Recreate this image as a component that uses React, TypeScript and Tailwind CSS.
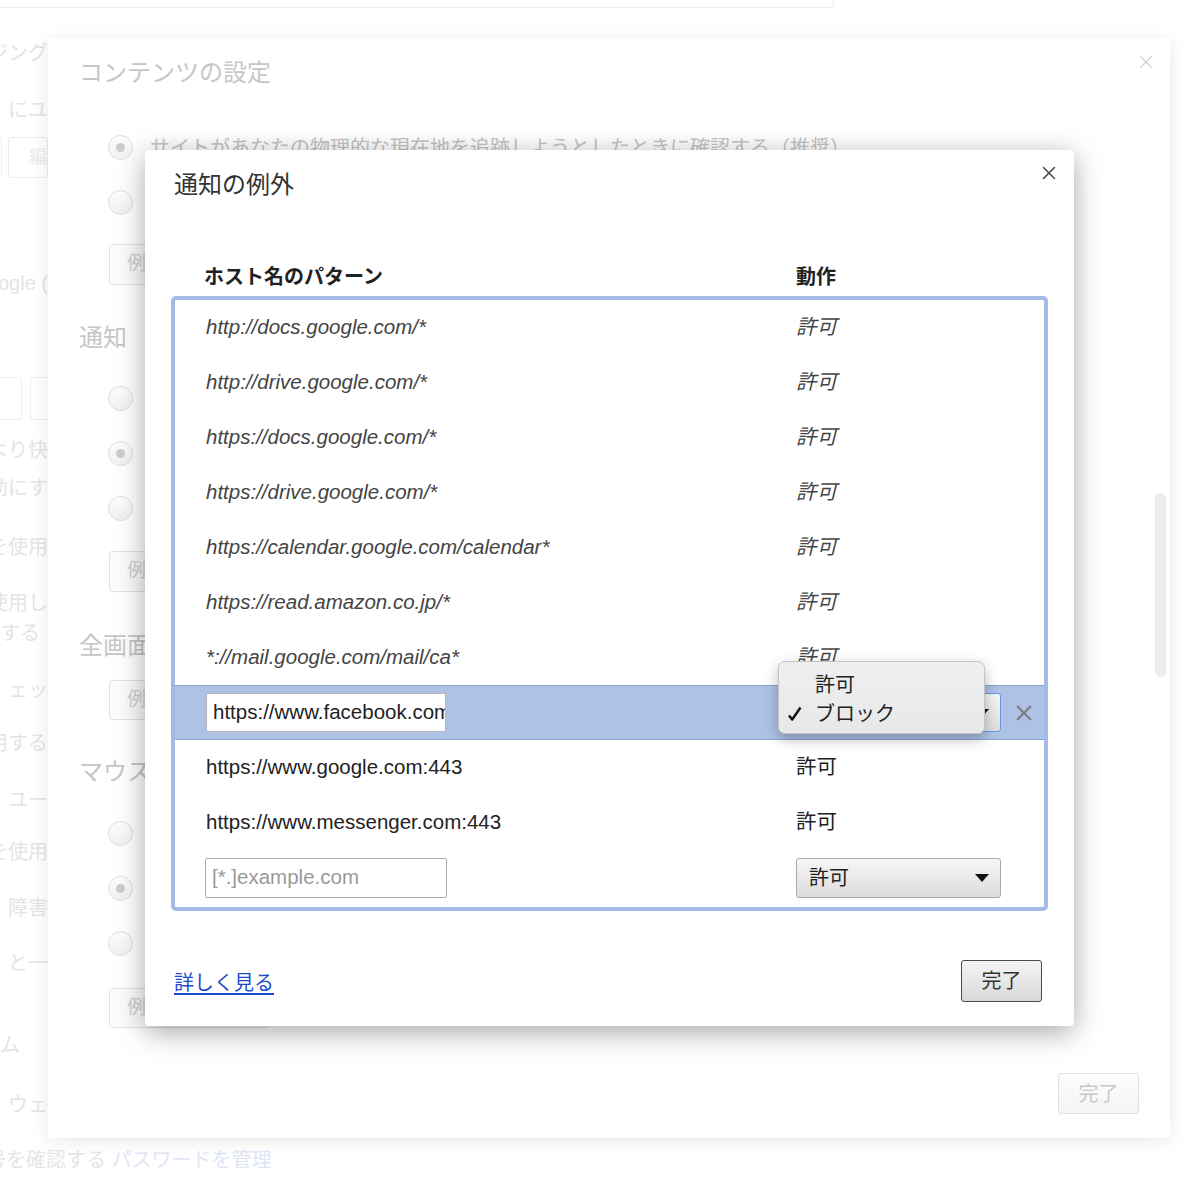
import type { ReactNode } from 'react';

const POLICY_ROWS = [
  'http://docs.google.com/*',
  'http://drive.google.com/*',
  'https://docs.google.com/*',
  'https://drive.google.com/*',
  'https://calendar.google.com/calendar*',
  'https://read.amazon.co.jp/*',
  '*://mail.google.com/mail/ca*',
];

const USER_ROWS = ['https://www.google.com:443', 'https://www.messenger.com:443'];

function Cross({ size, stroke, color }: { size: number; stroke: number; color: string }) {
  return (
    <svg width={size} height={size} viewBox="0 0 16 16" fill="none">
      <path d="M2 2 14 14M14 2 2 14" stroke={color} strokeWidth={stroke} strokeLinecap="square" />
    </svg>
  );
}

function Caret() {
  return (
    <svg width="14" height="8" viewBox="0 0 14 8">
      <path d="M0 0h14L7 8z" fill="#111" />
    </svg>
  );
}

// ---------- far background (settings page) ----------

function FadedLine({ mt, children }: { mt: string; children: ReactNode }) {
  return (
    <div className={`${mt} flex h-[28px] items-center justify-end whitespace-nowrap text-[20px] leading-[28px] text-[#e4e4e4]`}>
      {children}
    </div>
  );
}

function BackgroundPage() {
  return (
    <div className="flex flex-col">
      <div className="h-[8px] w-[834px] rounded-br-[3px] border-b border-r border-[#eeeeee]" />
      <div className="flex w-[48px] flex-col overflow-hidden">
        <FadedLine mt="mt-[31px]">ブラウジング</FadedLine>
        <FadedLine mt="mt-[29px]">にユ</FadedLine>
        <div className="mt-[13px] flex h-[41px] justify-end gap-[6px]">
          <div className="w-[40px] shrink-0 rounded-[3px] border border-[#eeeeee]" />
          <div className="flex w-[40px] shrink-0 items-center rounded-[3px] border border-[#eeeeee] pl-[20px] text-[18px] text-[#eaeaea]">
            編
          </div>
        </div>
        <FadedLine mt="mt-[91px]">Google (</FadedLine>
        <div className="mt-[80px] flex h-[43px] justify-end gap-[8px]">
          <div className="w-[40px] shrink-0 rounded-[3px] border border-[#eeeeee]" />
          <div className="w-[18px] shrink-0 rounded-l-[3px] border border-r-0 border-[#eeeeee]" />
        </div>
        <FadedLine mt="mt-[16px]">より快</FadedLine>
        <FadedLine mt="mt-[10px]">動にす</FadedLine>
        <FadedLine mt="mt-[31px]">を使用</FadedLine>
        <FadedLine mt="mt-[28px]">使用し</FadedLine>
        <div className="mt-[2px] flex h-[28px] items-center whitespace-nowrap text-[20px] leading-[28px] text-[#e4e4e4]">
          する
        </div>
        <FadedLine mt="mt-[29px]">ェッ</FadedLine>
        <FadedLine mt="mt-[25px]">用する</FadedLine>
        <FadedLine mt="mt-[29px]">ユー</FadedLine>
        <FadedLine mt="mt-[24px]">を使用</FadedLine>
        <FadedLine mt="mt-[28px]">障害</FadedLine>
        <FadedLine mt="mt-[27px]">と一</FadedLine>
        <div className="mt-[54px] flex h-[28px] items-center whitespace-nowrap text-[20px] leading-[28px] text-[#e4e4e4]">
          ム
        </div>
        <FadedLine mt="mt-[32px]">ウェ</FadedLine>
      </div>
      <div className="mt-[27px] -ml-[14px] whitespace-nowrap text-[20px] leading-[28px] text-[#e6e6e6]">
        号を確認する <span className="text-[#dfe6f6]">パスワードを管理</span>
      </div>
    </div>
  );
}

// ---------- middle dialog (content settings) ----------

function FadedRadio({ checked, label }: { checked?: boolean; label: string }) {
  return (
    <div className="flex h-[55px] items-center gap-[17px]">
      <div className="flex h-[25px] w-[25px] items-center justify-center rounded-full border border-[#dedede] bg-linear-to-b from-[#fdfdfd] to-[#f1f1f1]">
        {checked && <div className="h-[9px] w-[9px] rounded-full bg-[#cccccc]" />}
      </div>
      <span className="whitespace-nowrap text-[20px] text-[#c4c4c4]">{label}</span>
    </div>
  );
}

function FadedButton({ mt, h }: { mt: string; h: string }) {
  return (
    <div className={`${mt} ${h} ml-[30px] flex w-[160px] items-center rounded-[3px] border border-[#e2e2e2] bg-[#fbfbfb] pl-[17px] text-[19px] text-[#cfcfcf]`}>
      例外を管理...
    </div>
  );
}

function ContentSettingsDialog() {
  return (
    <div className="absolute left-[48px] top-[38px] h-[1100px] w-[1122px] rounded-[4px] bg-white shadow-[0_3px_18px_rgba(0,0,0,0.09)]">
      <div className="absolute right-[17px] top-[17px]">
        <Cross size={14} stroke={1.6} color="#d4d4d4" />
      </div>
      <div className="absolute right-[4px] top-[455px] h-[184px] w-[11px] rounded-full bg-[#ededed]" />

      <div className="flex flex-col pl-[31px] pt-[19px] text-[#c6c6c6]">
        <h2 className="text-[24px] leading-[32px]">コンテンツの設定</h2>
        <div className="ml-[29px] mt-[31px]">
          <FadedRadio checked label="サイトがあなたの物理的な現在地を追跡しようとしたときに確認する（推奨）" />
          <FadedRadio label="サイトに物理的な現在地の追跡を許可しない" />
        </div>
        <FadedButton mt="mt-[14px]" h="h-[41px]" />

        <h3 className="mt-[37px] text-[24px] leading-[32px]">通知</h3>
        <div className="ml-[29px] mt-[17px]">
          <FadedRadio label="すべてのサイトにデスクトップ通知の表示を許可する" />
          <FadedRadio checked label="サイトでデスクトップ通知を表示する場合に確認する（推奨）" />
          <FadedRadio label="サイトにデスクトップ通知の表示を許可しない" />
        </div>
        <FadedButton mt="mt-[15px]" h="h-[41px]" />

        <h3 className="mt-[38px] text-[24px] leading-[32px]">全画面</h3>
        <FadedButton mt="mt-[18px]" h="h-[40px]" />

        <h3 className="mt-[36px] text-[24px] leading-[32px]">マウス カーソル</h3>
        <div className="ml-[29px] mt-[18px]">
          <FadedRadio label="すべてのサイトにマウスカーソルの無効化を許可する" />
          <FadedRadio checked label="サイトでマウスカーソルを無効にする場合に確認する（推奨）" />
          <FadedRadio label="すべてのサイトでマウスカーソルの無効化を許可しない" />
        </div>
        <FadedButton mt="mt-[17px]" h="h-[40px]" />
      </div>

      <div className="absolute bottom-[24px] right-[31px] flex h-[41px] w-[81px] items-center justify-center rounded-[3px] border border-[#e0e0e0] bg-linear-to-b from-[#fdfdfd] to-[#f4f4f4] text-[20px] text-[#c8c8c8]">
        完了
      </div>
    </div>
  );
}

// ---------- front dialog (notification exceptions) ----------

function SelectBox({ focused, h }: { focused?: boolean; h: string }) {
  return (
    <div
      className={`flex ${h} w-[205px] items-center justify-between rounded-[3px] border bg-linear-to-b from-[#f5f5f5] to-[#dddddd] pl-[12px] pr-[11px] text-[20px] text-[#222] ${
        focused ? 'border-[#6b98e6]' : 'border-[#a9a9a9]'
      }`}
    >
      <span>許可</span>
      <Caret />
    </div>
  );
}

function PopupMenu() {
  return (
    <div className="absolute left-[603px] top-[-25px] z-10 h-[73px] w-[207px] rounded-[7px] border border-[#c4c4c4] bg-linear-to-b from-[#eeeff0] to-[#e7e8e9] pt-[8px] shadow-[0_5px_14px_rgba(0,0,0,0.28)]">
      <div className="flex h-[29px] items-center pl-[36px] text-[20px] text-[#222]">許可</div>
      <div className="flex h-[29px] items-center text-[20px] text-[#222]">
        <svg width="14" height="16" viewBox="0 0 14 16" className="ml-[9px]">
          <path d="M1 9.5 4.2 13.5 12.5 1.5" fill="none" stroke="#111" strokeWidth="2.4" strokeLinejoin="round" />
        </svg>
        <span className="ml-[13px]">ブロック</span>
      </div>
    </div>
  );
}

function NotificationExceptionsDialog() {
  return (
    <div className="absolute left-[145px] top-[150px] flex h-[876px] w-[929px] flex-col rounded-[4px] bg-white shadow-[0_6px_28px_rgba(0,0,0,0.35)]">
      <div className="absolute right-[18px] top-[16px]">
        <Cross size={14} stroke={2} color="#555" />
      </div>

      <h2 className="pl-[29px] pt-[19px] text-[24px] leading-[32px] text-[#333]">通知の例外</h2>

      <div className="mx-[26px] mt-[62px]">
        <div className="grid h-[28px] grid-cols-[592px_1fr] pl-[33px] text-[20px] font-bold leading-[28px] text-[#222]">
          <span>ホスト名のパターン</span>
          <span>動作</span>
        </div>

        <div className="mt-[5px] h-[615px] rounded-[5px] border-[4px] border-[#a3bae6] bg-white">
          {POLICY_ROWS.map((host) => (
            <div key={host} className="grid h-[55px] grid-cols-[590px_1fr] items-center pl-[31px] text-[20.5px] italic text-[#444]">
              <span>{host}</span>
              <span>許可</span>
            </div>
          ))}

          {/* row being edited */}
          <div className="relative grid h-[55px] grid-cols-[590px_1fr] items-center border-y border-[#86a3d7] bg-[#adc2e5] pl-[31px]">
            <div className="flex h-[39px] w-[240px] items-center overflow-hidden whitespace-nowrap rounded-[2px] border border-[#b5b5b5] bg-white pl-[6px] text-[20.5px] text-[#222]">
              https://www.facebook.com:443
            </div>
            <div className="flex items-center">
              <SelectBox focused h="h-[39px]" />
              <div className="ml-[15px]">
                <Cross size={16} stroke={2.4} color="#808080" />
              </div>
            </div>
            <PopupMenu />
          </div>

          {USER_ROWS.map((host) => (
            <div key={host} className="grid h-[55px] grid-cols-[590px_1fr] items-center pl-[31px] text-[20.5px] text-[#222]">
              <span>{host}</span>
              <span>許可</span>
            </div>
          ))}

          <div className="grid h-[55px] grid-cols-[590px_1fr] items-center pl-[30px]">
            <div className="flex h-[40px] w-[242px] items-center rounded-[2px] border border-[#adadad] bg-white pl-[6px] text-[20.5px] text-[#999]">
              [*.]example.com
            </div>
            <div className="pl-[1px]">
              <SelectBox h="h-[40px]" />
            </div>
          </div>
        </div>
      </div>

      <div className="mt-[49px] flex items-center justify-between pl-[29px] pr-[32px]">
        <a className="mt-[4px] text-[20px] leading-[28px] text-[#1f4bc9] underline underline-offset-[3px]">詳しく見る</a>
        <div className="flex h-[42px] w-[81px] items-center justify-center rounded-[3px] border border-[#4a4a4a] bg-linear-to-b from-[#f5f5f5] to-[#d9d9d9] text-[20px] text-[#333]">
          完了
        </div>
      </div>
    </div>
  );
}

export default function App() {
  return (
    <div className="relative h-[1182px] w-[1200px] overflow-hidden bg-white font-['Liberation_Sans','Noto_Sans_CJK_JP',sans-serif]">
      <BackgroundPage />
      <ContentSettingsDialog />
      <NotificationExceptionsDialog />
    </div>
  );
}
